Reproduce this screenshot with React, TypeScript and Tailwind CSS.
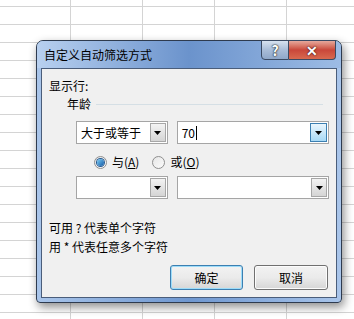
import React from 'react';

// ─── Excel-style grid behind the dialog ───────────────
const COLS = [71, 72, 72, 72, 72];
const ROWS = 19;

function SheetGrid() {
  return (
    <div className="flex flex-col">
      <div className="flex h-[7px]">
        {COLS.map((w, i) => (
          <div key={i} className="shrink-0 border-r border-b border-[#d4d4d4]" style={{ width: w }} />
        ))}
      </div>
      {Array.from({ length: ROWS }).map((_, r) => (
        <div key={r} className="flex h-[18px]">
          {COLS.map((w, i) => (
            <div key={i} className="shrink-0 border-r border-b border-[#d4d4d4]" style={{ width: w }} />
          ))}
        </div>
      ))}
    </div>
  );
}

function Arrow() {
  return (
    <svg width="7" height="4" viewBox="0 0 7 4">
      <path d="M0 0h7L3.5 4z" fill="#000" />
    </svg>
  );
}

function Combo({ width, text, active, caret }: { width: number; text?: string; active?: boolean; caret?: boolean }) {
  return (
    <div
      className="flex h-[23px] items-stretch border border-[#a5a5a5] bg-white p-px"
      style={{ width }}
    >
      <div className="flex flex-1 items-center pl-[3px] text-[12px] text-black">
        {text}
        {caret && <span className="ml-px inline-block h-[14px] w-px bg-black" />}
      </div>
      <div
        className={
          active
            ? 'flex w-[17px] items-center justify-center border border-[#3c7fb1] bg-gradient-to-b from-[#eaf6fd] to-[#a7d9f5]'
            : 'flex w-[16px] items-center justify-center border border-[#a7a7a7] bg-gradient-to-b from-[#f3f3f3] to-[#d5d5d5]'
        }
      >
        <Arrow />
      </div>
    </div>
  );
}

function Radio({ checked, label }: { checked?: boolean; label: React.ReactNode }) {
  return (
    <div className="flex items-center gap-[5px] text-[12px]">
      <div className="flex h-[13px] w-[13px] items-center justify-center rounded-full border border-[#8f8f8f] bg-gradient-to-br from-[#e6e6e6] to-[#fbfbfb]">
        {checked && (
          <div className="h-[7px] w-[7px] rounded-full bg-gradient-to-br from-[#7fd0f7] to-[#0f5aa5] ring-1 ring-[#27588f]" />
        )}
      </div>
      <span>{label}</span>
    </div>
  );
}

export default function App() {
  return (
    <div
      className="relative h-[319px] w-[354px] overflow-hidden bg-white text-black"
      style={{ fontFamily: '"Noto Sans CJK SC", "Liberation Sans", sans-serif' }}
    >
      <SheetGrid />

      {/* Dialog window */}
      <div className="absolute left-[36px] top-[40px] flex h-[263px] w-[306px] flex-col rounded-t-[7px] rounded-b-[4px] border border-[#2e3b4f] bg-gradient-to-r from-[#a9c5ea] via-[#6f97d0] to-[#a9c5ea] shadow-[2px_4px_10px_rgba(0,0,0,0.45)]">
        {/* Title bar */}
        <div className="relative flex h-[27px] shrink-0 items-center rounded-t-[6px] bg-gradient-to-r from-[#b8d0ef] via-[#6b93cc] to-[#9dbce5] pl-[7px]">
          <span className="text-[12px] leading-none text-black">自定义自动筛选方式</span>
          <div className="absolute right-[5px] top-[-1px] flex h-[20px]">
            <div className="flex w-[28px] items-center justify-center rounded-bl-[4px] border border-[#3a4a63] bg-gradient-to-b from-[#d7e2f0] via-[#a9bdd8] to-[#8fa7c9] text-[14px] font-bold text-white [text-shadow:0_0_2px_#111,0_0_1px_#111]">
              ?
            </div>
            <div className="flex w-[47px] items-center justify-center rounded-br-[4px] border border-l-0 border-[#3a4a63] bg-gradient-to-b from-[#e5a89c] via-[#c9473a] to-[#d8694f] text-[14px] font-bold text-white [text-shadow:0_0_2px_#411,0_0_1px_#411]">
              ✕
            </div>
          </div>
        </div>

        {/* Client area */}
        <div className="mx-[4px] mb-[4px] flex flex-1 flex-col border border-[#4a5d7a] bg-[#f0f0f0] px-[7px] text-[12px]">
          <div className="mt-[9px] leading-[16px]">显示行:</div>
          <div className="mt-[2px] flex items-center pl-[18px] leading-[16px]">
            <span>年龄</span>
            <div className="ml-[5px] mr-[6px] h-px flex-1 bg-[#d5dfe5]" />
          </div>
          <div className="mt-[9px] flex gap-[9px] pl-[27px]">
            <Combo width={92} text="大于或等于" />
            <Combo width={153} text="70" active caret />
          </div>
          <div className="mt-[9px] flex gap-[13px] pl-[45px]">
            <Radio checked label={<>与(<u>A</u>)</>} />
            <Radio label={<>或(<u>O</u>)</>} />
          </div>
          <div className="mt-[5px] flex gap-[9px] pl-[27px]">
            <Combo width={92} />
            <Combo width={153} />
          </div>
          <div className="mt-[19px] leading-[19px]">可用 ? 代表单个字符</div>
          <div className="leading-[19px]">用 * 代表任意多个字符</div>
          <div className="mt-[9px] flex justify-end gap-[11px] pr-[1px]">
            <button className="flex h-[25px] w-[73px] items-center justify-center rounded-[3px] border border-[#3c7fb1] bg-gradient-to-b from-[#f2f2f2] via-[#ebebeb] to-[#d6d6d6] text-[12px] shadow-[inset_0_0_0_1px_#9ddcf9]">
              确定
            </button>
            <button className="flex h-[25px] w-[74px] items-center justify-center rounded-[3px] border border-[#707070] bg-gradient-to-b from-[#f2f2f2] via-[#ebebeb] to-[#d6d6d6] text-[12px] shadow-[inset_0_0_0_1px_#fcfcfc]">
              取消
            </button>
          </div>
        </div>
      </div>
    </div>
  );
}
